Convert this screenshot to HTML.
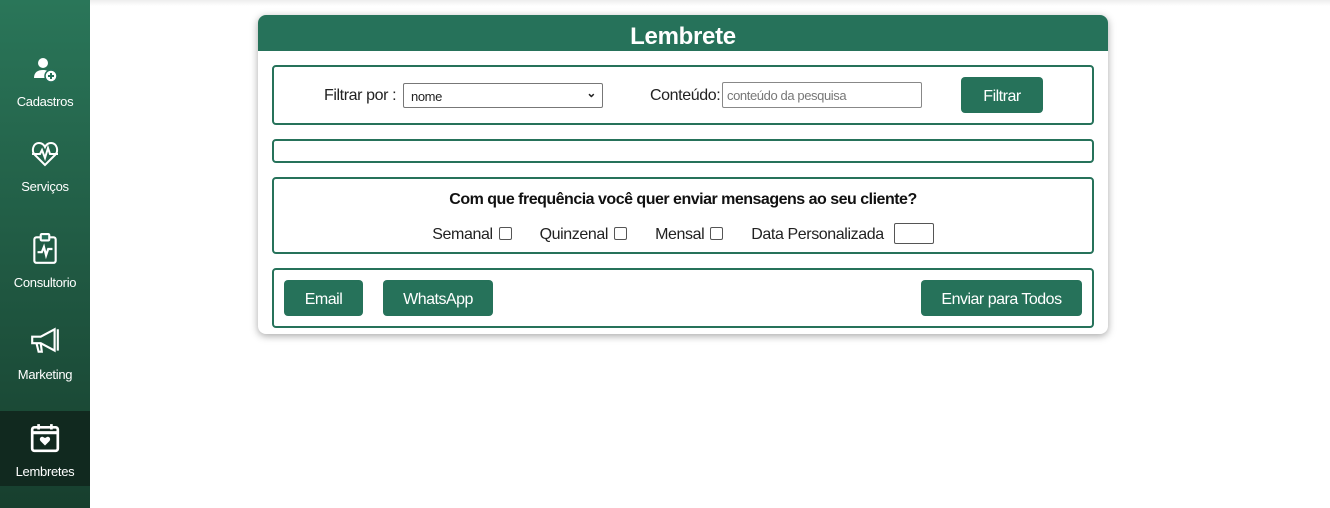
<!DOCTYPE html>
<html><head><style>
*{box-sizing:border-box;margin:0;padding:0}
body{width:1330px;height:508px;background:#fff;font-family:"Liberation Sans",sans-serif;position:relative;overflow:hidden;letter-spacing:-0.4px}
.side{position:absolute;left:0;top:0;width:90px;height:508px;background:linear-gradient(#2a7659,#173f2e)}
.it{position:absolute;left:0;width:90px;text-align:center;color:#fff;font-size:13px;letter-spacing:-0.3px}
.it svg{display:block;margin:0 auto 10px}
.card{position:absolute;left:258px;top:15px;width:850px;height:319px;background:#fff;border-radius:8px;box-shadow:0 2px 8px rgba(0,0,0,.35);overflow:hidden}
.hd{height:36px;background:#26725a;color:#fff;text-align:center;font-size:24px;font-weight:bold;line-height:44px;letter-spacing:-0.3px}
.box{position:absolute;left:14px;width:822px;border:2px solid #26725a;border-radius:4px}
.btn{position:absolute;background:#26725a;color:#fff;border-radius:4px;font-size:16px;text-align:center;line-height:39px!important;letter-spacing:-0.5px}
.t{position:absolute;font-size:16px;color:#222;white-space:nowrap}
.cb{display:inline-block;width:13px;height:13px;border:1px solid #555;border-radius:2px;vertical-align:-1px;margin-left:6px}
.row{position:absolute;left:0;width:818px;top:44px;text-align:center;font-size:16px;color:#222;white-space:nowrap}
.row span{margin:0 14px}
</style></head><body>
<div class="side">
<div class="it" style="top:56px"><svg width="28" height="28" viewBox="0 0 28 28"><circle cx="12" cy="7" r="5" fill="#fff"/><path d="M3 22c0-6 4-8 9-8 3 0 5 1 6 2v6z" fill="#fff"/><circle cx="20" cy="20" r="6" fill="#fff" stroke="#26705a" stroke-width="1.5"/><path d="M20 17v6M17 20h6" stroke="#26705a" stroke-width="2"/></svg>Cadastros</div>
<div class="it" style="top:139px"><svg width="30" height="30" viewBox="0 0 30 28"><path d="M15 25L5 15C1 11 3 3 9 3c3 0 5 2 6 4 1-2 3-4 6-4 6 0 8 8 4 12z" fill="none" stroke="#fff" stroke-width="2"/><path d="M2 14h8l2-4 3 8 3-10 2 6h8" fill="none" stroke="#fff" stroke-width="2"/></svg>Serviços</div>
<div class="it" style="top:233px"><svg width="28" height="32" viewBox="0 0 26 30"><rect x="3" y="4" width="20" height="24" rx="2" fill="none" stroke="#fff" stroke-width="2"/><rect x="9" y="1" width="8" height="6" rx="1" fill="#26705a" stroke="#fff" stroke-width="2"/><path d="M6 18h4l2-5 2 8 2-6h4" fill="none" stroke="#fff" stroke-width="2"/></svg>Consultorio</div>
<div class="it" style="top:325px"><svg width="32" height="32" viewBox="0 0 30 30"><path d="M3 11h8l13-7v20l-13-7H3z" fill="none" stroke="#fff" stroke-width="2"/><path d="M7 17l2 8h3l-1-8" fill="none" stroke="#fff" stroke-width="2"/><path d="M27 4v20" stroke="#fff" stroke-width="2"/></svg>Marketing</div>
<div style="position:absolute;left:0;top:411px;width:90px;height:75px;background:#11291f"></div>
<div class="it" style="top:422px"><svg width="32" height="32" viewBox="0 0 30 30"><rect x="3" y="5" width="24" height="22" rx="2" fill="none" stroke="#fff" stroke-width="2.5"/><path d="M3 10h24" stroke="#fff" stroke-width="3"/><path d="M9 2v5M21 2v5" stroke="#fff" stroke-width="2.5"/><path d="M15 22l-4-4c-2-2 0-5 2-4l2 1 2-1c2-1 4 2 2 4z" fill="#fff"/></svg>Lembretes</div>
</div>
<div style="position:absolute;left:90px;top:0;width:1240px;height:6px;background:linear-gradient(#eee,#fff)"></div>
<div class="card">
<div class="hd">Lembrete</div>
<div class="box" style="top:50px;height:60px">
<span class="t" style="left:50px;top:20px">Filtrar por :</span>
<div style="position:absolute;left:129px;top:16px;width:200px;height:25px;border:1px solid #777;border-radius:2px;font-size:13px;padding:5px 7px;color:#222">nome<span style="position:absolute;right:6px;top:2px;font-size:12px;font-weight:bold">⌄</span></div>
<span class="t" style="left:376px;top:20px">Conteúdo:</span>
<div style="position:absolute;left:448px;top:15px;width:200px;height:26px;border:1px solid #888;border-radius:2px;font-size:13px;padding:5px 4px;color:#777">conteúdo da pesquisa</div>
<div class="btn" style="left:687px;top:10px;width:82px;height:36px">Filtrar</div>
</div>
<div class="box" style="top:124px;height:24px"></div>
<div class="box" style="top:162px;height:77px">
<div class="t" style="left:0;width:818px;text-align:center;top:12px;font-weight:bold;font-size:16px;letter-spacing:-0.5px;color:#111">Com que frequência você quer enviar mensagens ao seu cliente?</div>
<div class="row"><span>Semanal<i class="cb"></i></span><span>Quinzenal<i class="cb"></i></span><span>Mensal<i class="cb"></i></span><span>Data Personalizada <i class="cb" style="width:40px;height:21px;vertical-align:-5px"></i></span></div>
</div>
<div class="box" style="top:253px;height:60px">
<div class="btn" style="left:10px;top:10px;width:79px;height:36px">Email</div>
<div class="btn" style="left:109px;top:10px;width:110px;height:36px">WhatsApp</div>
<div class="btn" style="left:647px;top:10px;width:161px;height:36px">Enviar para Todos</div>
</div>
</div>
</body></html>
